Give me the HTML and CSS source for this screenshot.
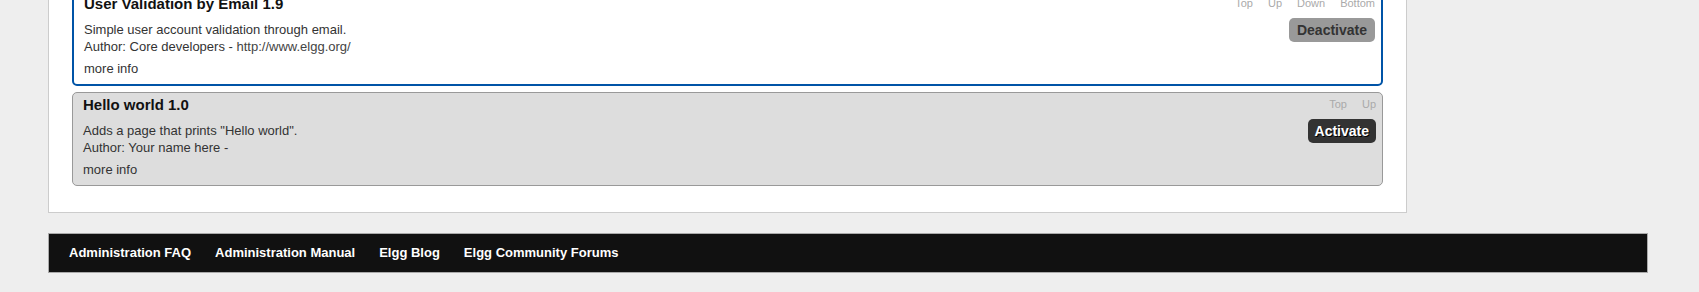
FILE: index.html
```html
<!DOCTYPE html>
<html>
<head>
  <title>Plugins - Administration</title>
  <link rel="stylesheet" href="styles.css">
</head>
<body>
  <div class="page">
    <!-- Main layout: plugin list and (empty) sidebar -->
    <div class="layout">
      <div class="main">
        <div class="plugin plugin-active">
          <div class="plugin-head">
            <h3 class="plugin-title">User Validation by Email 1.9</h3>
            <ul class="plugin-order">
              <li><a href="#">Top</a></li>
              <li><a href="#">Up</a></li>
              <li><a href="#">Down</a></li>
              <li><a href="#">Bottom</a></li>
            </ul>
          </div>
          <div class="plugin-body">
            <div class="plugin-text">
              <p class="plugin-desc">Simple user account validation through email.<br>
              Author: Core developers - <a class="author-link" href="#">http://www.elgg.org/</a></p>
              <a class="more-info" href="#">more info</a>
            </div>
            <a class="button button-deactivate" href="#">Deactivate</a>
          </div>
        </div>
        <div class="plugin plugin-inactive">
          <div class="plugin-head">
            <h3 class="plugin-title">Hello world 1.0</h3>
            <ul class="plugin-order">
              <li><a href="#">Top</a></li>
              <li><a href="#">Up</a></li>
            </ul>
          </div>
          <div class="plugin-body">
            <div class="plugin-text">
              <p class="plugin-desc">Adds a page that prints "Hello world".<br>
              Author: Your name here - </p>
              <a class="more-info" href="#">more info</a>
            </div>
            <a class="button button-activate" href="#">Activate</a>
          </div>
        </div>
      </div>
      <div class="sidebar"></div>
    </div>
    <!-- Footer menu -->
    <div class="footer">
      <ul class="footer-menu">
        <li><a href="#">Administration FAQ</a></li>
        <li><a href="#">Administration Manual</a></li>
        <li><a href="#">Elgg Blog</a></li>
        <li><a href="#">Elgg Community Forums</a></li>
      </ul>
    </div>
  </div>
</body>
</html>
```

FILE: styles.css
```css
/*Page*/
body {
  margin: 0;
  background-color: #eeeeee;
  color: #333333;
  font-family: "Liberation Sans", Arial, sans-serif;
  font-size: 13px;
  line-height: 17px;
}
a {
  color: #333333;
  text-decoration: none;
}
ul {
  list-style: none;
  margin: 0;
  padding: 0;
}
.page {
  width: 1600px;
  margin-left: 48px;
}
/*Layout: the page is scrolled, so the top of the list is cut off*/
.layout {
  display: flex;
  margin-top: -33px;
}
.main {
  box-sizing: border-box;
  width: 1359px;
  background-color: white;
  border: 1px solid #cccccc;
  padding: 22px 23px 26px 23px;
}
.sidebar {
  flex: 1;
}
/*Plugin boxes*/
.plugin {
  border-radius: 5px;
  padding: 3px 6px 7px 10px;
  margin-bottom: 6px;
}
.plugin:last-child {
  margin-bottom: 0;
}
.plugin-active {
  background-color: white;
  border: 2px solid #0054a7;
}
.plugin-inactive {
  background-color: #dddddd;
  border: 1px solid #999999;
}
.plugin-head {
  display: flex;
  justify-content: space-between;
  align-items: flex-start;
  margin-bottom: 5px;
}
.plugin-title {
  margin: 0;
  font-size: 15px;
  line-height: 18px;
  font-weight: bold;
  color: #111111;
}
.plugin-order {
  display: flex;
  gap: 15px;
  font-size: 11px;
}
.plugin-order a {
  color: #aaaaaa;
}
.plugin-body {
  display: flex;
  justify-content: space-between;
  align-items: flex-start;
}
.plugin-desc {
  margin: 3px 0 5px 0;
}
.author-link {
  color: #444444;
}
/*Buttons*/
.button {
  display: block;
  font-size: 14px;
  font-weight: bold;
  line-height: 18px;
  padding: 3px 8px;
  border-radius: 5px;
}
.button-deactivate {
  background-color: #999999;
  color: #333333;
}
.button-activate {
  background-color: #333333;
  color: white;
  padding: 3px 7px;
  text-shadow: 1px 1px 0 #000000;
}
/*Footer*/
.footer {
  margin-top: 20px;
  background-color: #111111;
  border: 1px solid #aaaaaa;
  height: 38px;
}
.footer-menu {
  display: flex;
  padding-left: 8px;
}
.footer-menu a {
  display: block;
  padding: 0 12px;
  line-height: 38px;
  color: white;
  font-weight: bold;
}
```
